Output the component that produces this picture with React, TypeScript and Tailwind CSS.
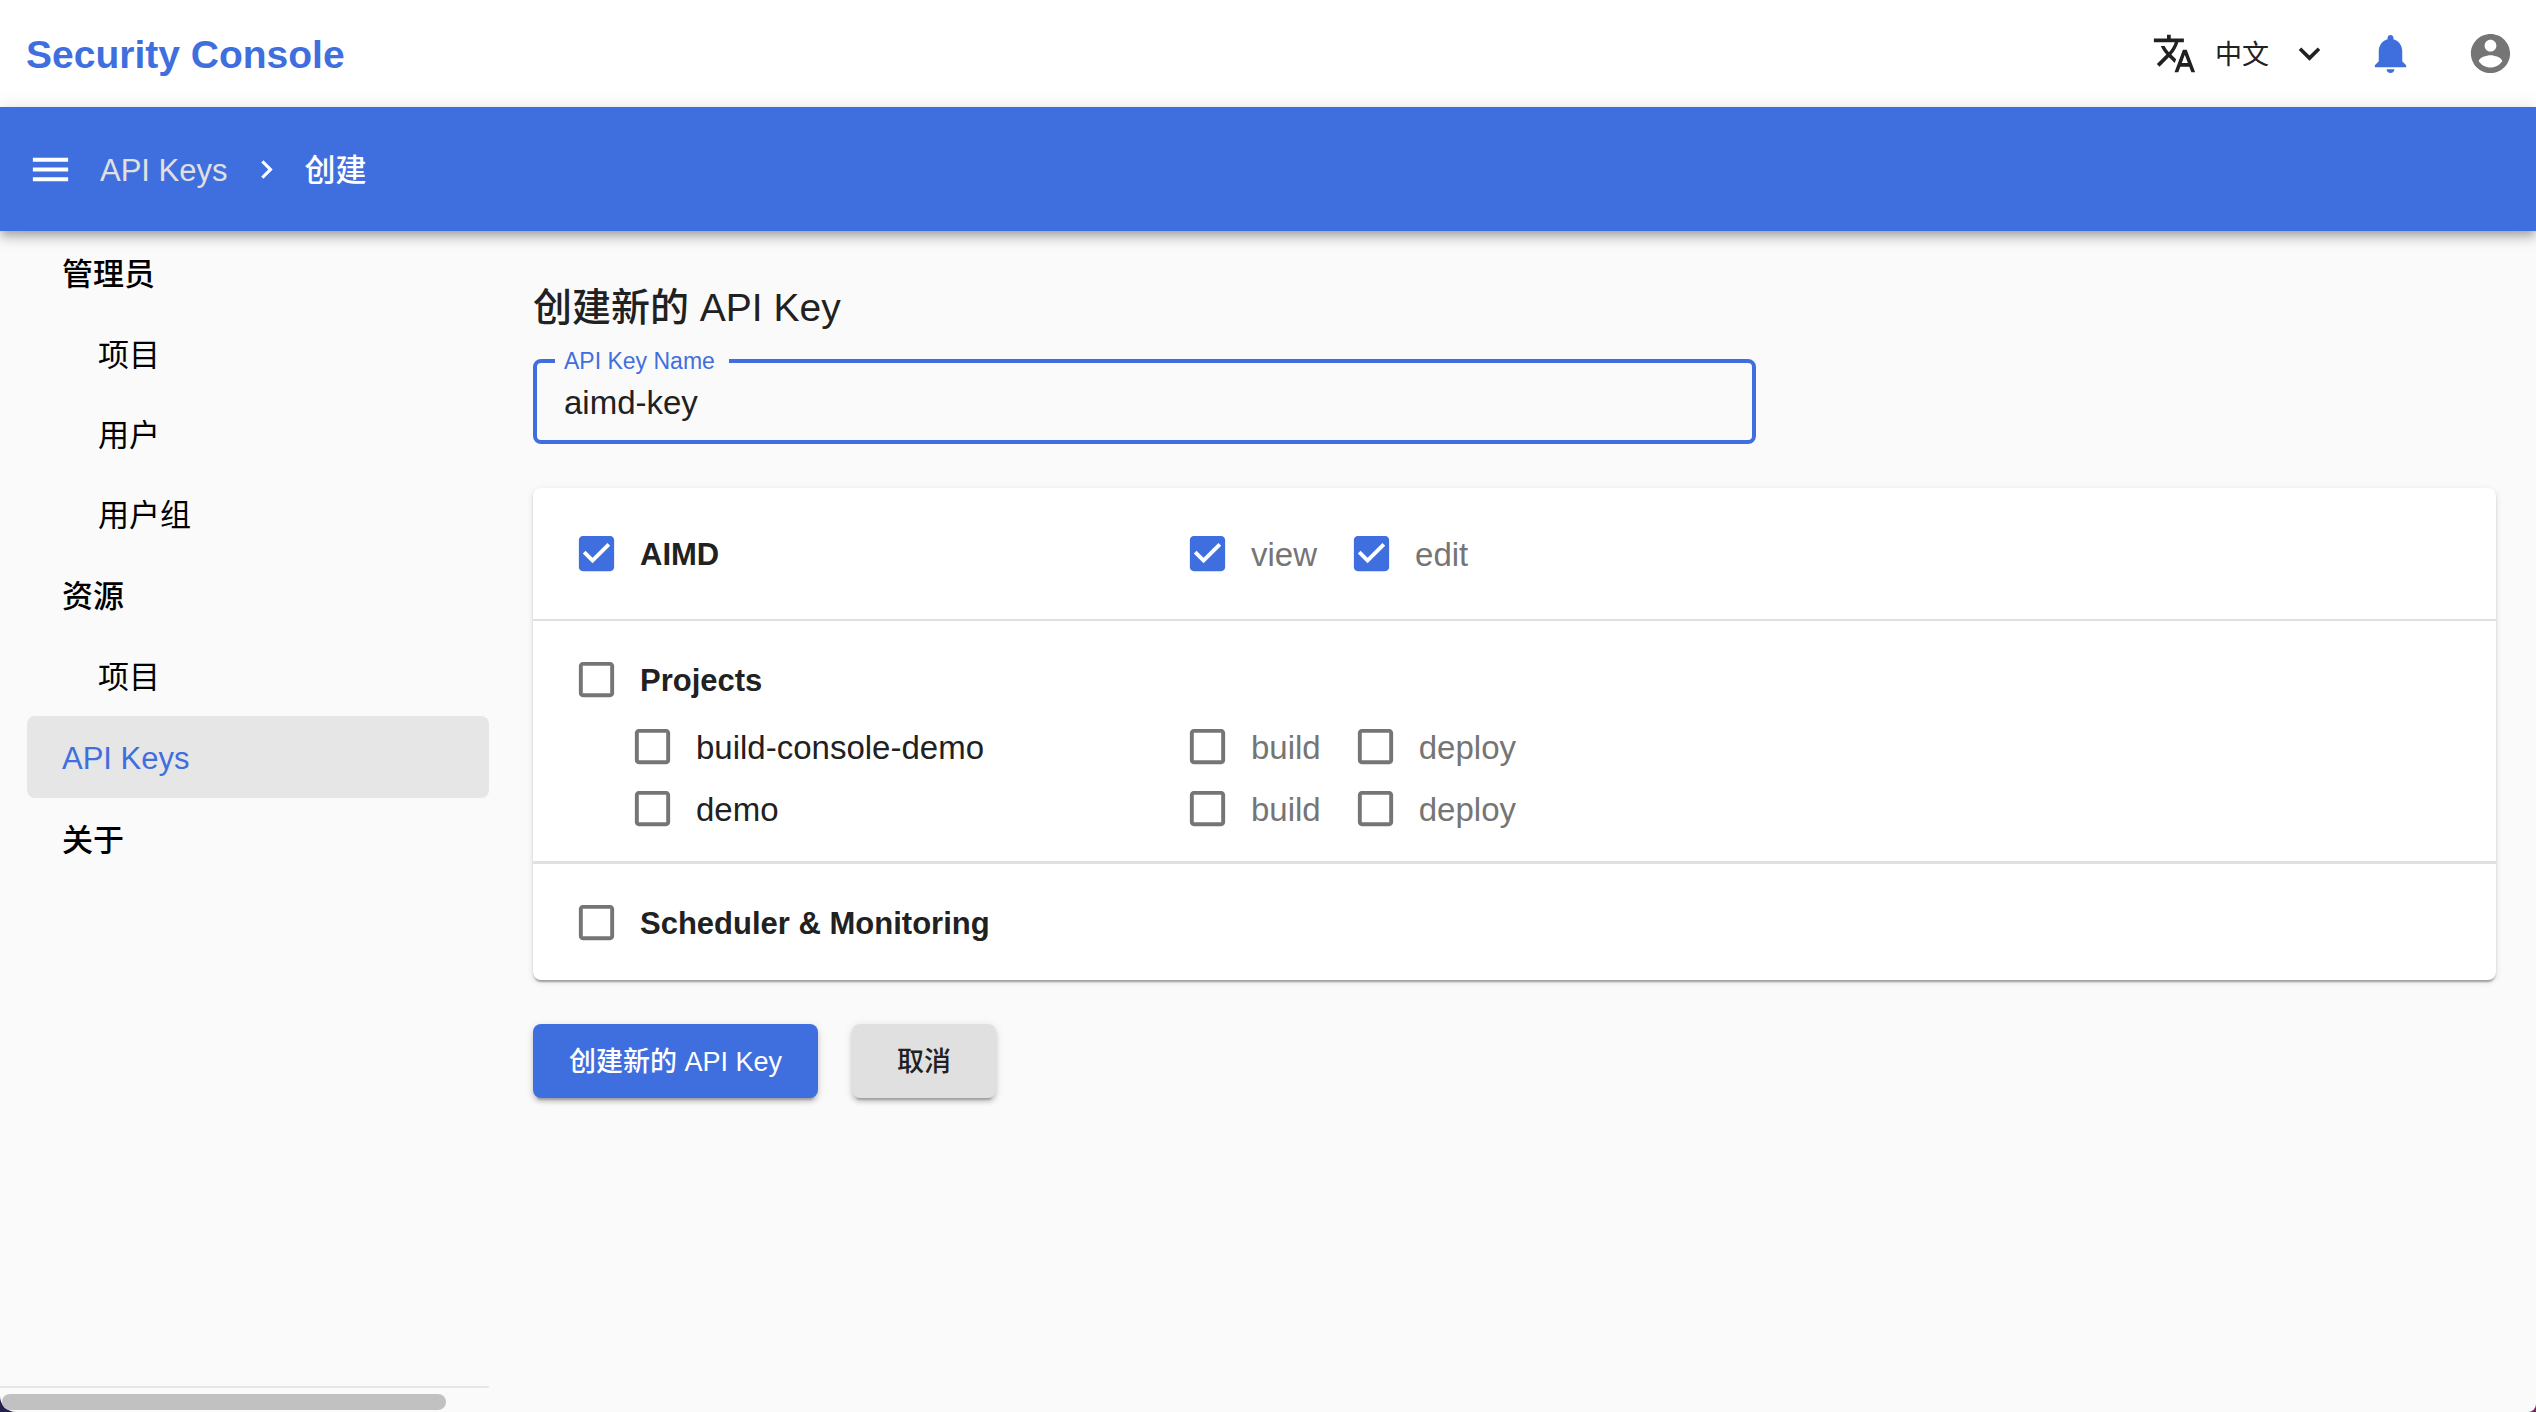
import { useState, type ReactNode } from "react";

function Glyph({ d, className }: { d: string; className: string }) {
  return (
    <svg viewBox="0 0 24 24" fill="currentColor" aria-hidden="true" className={`shrink-0 ${className}`}>
      <path d={d} />
    </svg>
  );
}

const TRANSLATE =
  "M12.87 15.07l-2.54-2.51.03-.03c1.74-1.94 2.98-4.17 3.71-6.53H17V4h-7V2H8v2H1v1.99h11.17C11.5 7.92 10.44 9.75 9 11.35 8.07 10.32 7.3 9.19 6.69 8h-2c.73 1.63 1.73 3.17 2.98 4.56l-5.09 5.02L4 19l5-5 3.11 3.11.76-2.04zM18.5 10h-2L12 22h2l1.12-3h4.75L21 22h2l-4.5-12zm-2.62 7l1.62-4.33L19.12 17h-3.24z";
const EXPAND = "M7.41 8.59L12 13.17l4.59-4.58L18 10l-6 6-6-6 1.41-1.41z";
const BELL =
  "M12 22c1.1 0 2-.9 2-2h-4c0 1.1.89 2 2 2zm6-6v-5c0-3.07-1.64-5.64-4.5-6.32V4c0-.83-.67-1.5-1.5-1.5s-1.5.67-1.5 1.5v.68C7.63 5.36 6 7.92 6 11v5l-2 2v1h16v-1l-2-2z";
const ACCOUNT =
  "M12 2C6.48 2 2 6.48 2 12s4.48 10 10 10 10-4.48 10-10S17.52 2 12 2zm0 3c1.66 0 3 1.34 3 3s-1.34 3-3 3-3-1.34-3-3 1.34-3 3-3zm0 14.2c-2.5 0-4.71-1.28-6-3.22.03-1.99 4-3.08 6-3.08 1.99 0 5.97 1.09 6 3.08-1.29 1.94-3.5 3.22-6 3.22z";
const MENU = "M3 18h18v-2H3v2zm0-5h18v-2H3v2zm0-7v2h18V6H3z";
const NEXT = "M10 6L8.59 7.41 13.17 12l-4.58 4.59L10 18l6-6z";
const BOX_ON =
  "M19 3H5c-1.11 0-2 .9-2 2v14c0 1.1.89 2 2 2h14c1.11 0 2-.9 2-2V5c0-1.1-.89-2-2-2zm-9 14l-5-5 1.41-1.41L10 14.17l7.59-7.59L19 8l-9 9z";
const BOX_OFF =
  "M19 5v14H5V5h14m0-2H5c-1.1 0-2 .9-2 2v14c0 1.1.9 2 2 2h14c1.1 0 2-.9 2-2V5c0-1.1-.9-2-2-2z";

function Check({ label, initial = false, textClass }: { label: string; initial?: boolean; textClass: string }) {
  const [on, setOn] = useState(initial);
  return (
    <label className="flex h-[62px] cursor-pointer items-center gap-5">
      <input type="checkbox" className="peer sr-only" checked={on} onChange={() => setOn(!on)} />
      <Glyph d={on ? BOX_ON : BOX_OFF} className={on ? "size-[47px] text-[#3f6fde]" : "size-[47px] text-[#757575]"} />
      <span className={`pt-1 ${textClass}`}>{label}</span>
    </label>
  );
}

const STRONG = "text-[31px] leading-10 font-bold text-[#212121]";
const PLAIN = "text-[33px] leading-10 text-[#212121]";
const MUTED = "text-[33px] leading-10 text-[#757575]";

function PermissionRow({ name, actions }: { name: ReactNode; actions: ReactNode }) {
  return (
    <div className="grid grid-cols-[611fr_1272fr]">
      <div className="flex">{name}</div>
      <div className="flex gap-[31px]">{actions}</div>
    </div>
  );
}

const NAV = [
  { label: "管理员", kind: "group" },
  { label: "项目", kind: "child" },
  { label: "用户", kind: "child" },
  { label: "用户组", kind: "child" },
  { label: "资源", kind: "group" },
  { label: "项目", kind: "child" },
  { label: "API Keys", kind: "active" },
  { label: "关于", kind: "group" },
];

const NAV_CLASS: Record<string, string> = {
  group: "flex h-[82px] items-center rounded-lg pt-1 pl-[35px] font-medium text-black",
  child: "flex h-20 items-center rounded-lg pt-1 pl-[71px] text-black",
  active: "flex h-[82px] items-center rounded-lg bg-[#e6e6e6] pt-1 pl-[35px] font-medium text-[#3f6fde]",
};

export default function App() {
  const [name, setName] = useState("aimd-key");
  return (
    <div className="bg-linear-to-r from-[#25234d] to-[#6f2b5a]">
      <div className="flex min-h-screen flex-col rounded-br-lg rounded-bl-[16px] bg-[#fafafa] font-['Liberation_Sans','Noto_Sans_CJK_SC',sans-serif] text-[#212121]">
        <header className="flex h-[107px] items-center bg-white pr-[22px] pl-[26px]">
          <h1 className="pt-0.5 text-[39px] leading-[52px] font-bold text-[#3f6fde]">Security Console</h1>
          <div className="ml-auto flex items-center">
            <button type="button" className="flex items-center text-[27px] leading-10">
              <Glyph d={TRANSLATE} className="mr-[18px] size-[45px]" />
              <span className="pt-0.5">中文</span>
              <Glyph d={EXPAND} className="ml-[19px] size-[43px]" />
            </button>
            <button type="button" aria-label="Notifications" className="ml-9 text-[#3f6fde]">
              <Glyph d={BELL} className="size-[47px]" />
            </button>
            <button type="button" aria-label="Account" className="ml-[53px] text-[#757575]">
              <Glyph d={ACCOUNT} className="size-[47px]" />
            </button>
          </div>
        </header>

        <div className="relative flex h-[124px] items-center bg-[#3f6fde] pl-[27px] text-[31px] leading-10 text-white shadow-[0_4px_8px_-2px_rgba(0,0,0,0.2),0_8px_10px_0_rgba(0,0,0,0.14),0_2px_20px_0_rgba(0,0,0,0.12)]">
          <button type="button" aria-label="Menu">
            <Glyph d={MENU} className="size-[47px]" />
          </button>
          <nav aria-label="Breadcrumb" className="ml-[26px] flex items-center gap-5 font-medium">
            <a href="#keys" className="pt-[3px] text-[#e0e0e0]">API Keys</a>
            <Glyph d={NEXT} className="size-[37px]" />
            <span className="pt-[3px]">创建</span>
          </nav>
        </div>

        <div className="flex flex-1">
          <aside className="flex w-[489px] shrink-0 flex-col justify-between">
            <nav aria-label="Main" className="pt-px pl-[27px] text-[31px] leading-10">
              {NAV.map((item, i) => (
                <a key={i} href="#nav" className={NAV_CLASS[item.kind]}>
                  {item.label}
                </a>
              ))}
            </nav>
            <div className="border-t-2 border-[#e6e6e6] px-0.5 pt-1.5 pb-0.5">
              <div className="h-4 w-[444px] rounded-full bg-[#c1c1c1]" />
            </div>
          </aside>

          <main className="min-w-0 flex-1 pt-[51px] pr-10 pl-11">
            <h2 className="text-[39px] leading-[52px] font-medium">创建新的 API Key</h2>
            <fieldset className="mt-[13px] w-[1223px] max-w-full rounded-lg border-4 border-[#3f6fde] pr-[27px] pb-[9px] pl-[18px]">
              <legend className="pr-3.5 pl-[9px] text-[23px] leading-7 text-[#3f6fde]">
                <label htmlFor="key-name">API Key Name</label>
              </legend>
              <input
                id="key-name"
                value={name}
                onChange={(e) => setName(e.target.value)}
                className="block h-14 w-full bg-transparent pl-[9px] text-[33px] outline-none"
              />
            </fieldset>

            <div className="mt-11 rounded-lg bg-white shadow-[0_4px_2px_-2px_rgba(0,0,0,0.2),0_2px_2px_0_rgba(0,0,0,0.14),0_2px_6px_0_rgba(0,0,0,0.12)]">
              <section className="border-b-2 border-[#e0e0e0] px-10 pt-[34px] pb-[35px]">
                <PermissionRow
                  name={<Check label="AIMD" initial textClass={STRONG} />}
                  actions={
                    <>
                      <Check label="view" initial textClass={MUTED} />
                      <Check label="edit" initial textClass={MUTED} />
                    </>
                  }
                />
              </section>
              <section className="border-b-3 border-[#e0e0e0] px-10 pt-[27px] pb-[22px]">
                <div className="mb-[5px] flex">
                  <Check label="Projects" textClass={STRONG} />
                </div>
                {["build-console-demo", "demo"].map((project) => (
                  <PermissionRow
                    key={project}
                    name={
                      <div className="pl-14">
                        <Check label={project} textClass={PLAIN} />
                      </div>
                    }
                    actions={
                      <>
                        <Check label="build" textClass={MUTED} />
                        <Check label="deploy" textClass={MUTED} />
                      </>
                    }
                  />
                ))}
              </section>
              <section className="flex px-10 pt-[27px] pb-[27px]">
                <Check label="Scheduler & Monitoring" textClass={STRONG} />
              </section>
            </div>

            <div className="mt-11 flex gap-[34px] text-[27px] leading-10 font-medium">
              <button
                type="button"
                className="h-[74px] rounded-lg bg-[#3f6fde] px-9 pt-0.5 text-white shadow-[0_6px_2px_-4px_rgba(0,0,0,0.2),0_4px_4px_0_rgba(0,0,0,0.14),0_2px_10px_0_rgba(0,0,0,0.12)]"
              >
                创建新的 API Key
              </button>
              <button
                type="button"
                className="h-[74px] rounded-lg bg-[#e0e0e0] px-[45px] pt-0.5 text-[#212121] shadow-[0_6px_2px_-4px_rgba(0,0,0,0.2),0_4px_4px_0_rgba(0,0,0,0.14),0_2px_10px_0_rgba(0,0,0,0.12)]"
              >
                取消
              </button>
            </div>
          </main>
        </div>
      </div>
    </div>
  );
}
